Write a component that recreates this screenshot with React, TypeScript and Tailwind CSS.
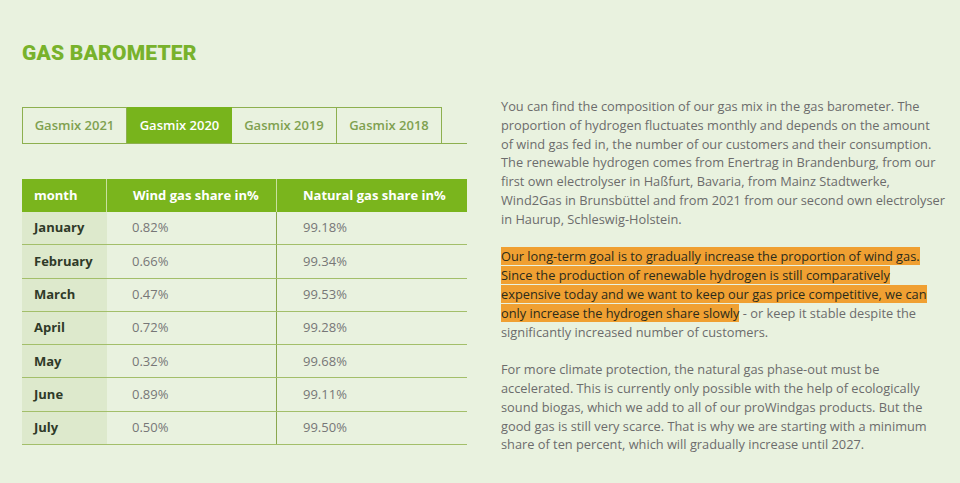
import React from "react";

const rows = [
  ["January", "0.82%", "99.18%"],
  ["February", "0.66%", "99.34%"],
  ["March", "0.47%", "99.53%"],
  ["April", "0.72%", "99.28%"],
  ["May", "0.32%", "99.68%"],
  ["June", "0.89%", "99.11%"],
  ["July", "0.50%", "99.50%"],
];

const tabs = ["Gasmix 2021", "Gasmix 2020", "Gasmix 2019", "Gasmix 2018"];

export default function App() {
  return (
    <div
      className="w-[960px] h-[483px] overflow-hidden bg-[#e9f2df] text-[#666]"
      style={{ fontFamily: '"Open Sans", "Liberation Sans", sans-serif' }}
    >
      <div className="px-[22px] pt-[40px]">
        <h1
          className="text-[21px] leading-[26px] font-black tracking-[0.2px] text-[#78b22c]"
          style={{ fontFamily: 'Roboto, "Liberation Sans", sans-serif' }}
        >
          GAS BAROMETER
        </h1>
        <div className="flex gap-[34px] mt-[41px]">
          <div className="w-[445px] shrink-0">
            <div className="flex border-b border-[#8db04f] w-[445px]">
              {tabs.map((t, i) => (
                <div
                  key={t}
                  className={
                    i === 1
                      ? "w-[105px] h-[36px] flex items-center justify-center text-[13px] font-semibold text-white bg-[#78b41c] border-t border-[#78b41c]"
                      : "w-[105px] h-[36px] flex items-center justify-center text-[13px] font-semibold text-[#7fa150] border-t border-r border-[#8db04f] " +
                        (i === 0 ? "border-l" : "")
                  }
                >
                  {t}
                </div>
              ))}
            </div>
            <div className="mt-[35px]">
              <div className="flex h-[33px] bg-[#7ab51d] text-white text-[13px] font-bold items-center">
                <div className="w-[85px] pl-[12px] h-full flex items-center border-r border-[#c9e09f]">month</div>
                <div className="w-[170px] pl-[26px] h-full flex items-center border-r border-[#c9e09f]">Wind gas share in%</div>
                <div className="flex-1 pl-[26px] h-full flex items-center">Natural gas share in%</div>
              </div>
              {rows.map((r) => (
                <div key={r[0]} className="flex h-[33.3px] border-b border-[#a3bf6a] text-[13px]">
                  <div className="w-[85px] pl-[12px] flex items-center bg-[#dde9cc] text-[13px] font-bold text-[#2f3a28]">
                    {r[0]}
                  </div>
                  <div className="w-[170px] pl-[25px] flex items-center border-r border-[#8aa84e] text-[#777]">
                    {r[1]}
                  </div>
                  <div className="flex-1 pl-[26px] flex items-center text-[#777]">{r[2]}</div>
                </div>
              ))}
            </div>
          </div>
          <div className="w-[458px] -mt-[10px] text-[12.8px] leading-[18.8px] text-[#6c6c6c] whitespace-nowrap">
            <p>
              You can find the composition of our gas mix in the gas barometer. The
              <br />
              proportion of hydrogen fluctuates monthly and depends on the amount
              <br />
              of wind gas fed in, the number of our customers and their consumption.
              <br />
              The renewable hydrogen comes from Enertrag in Brandenburg, from our
              <br />
              first own electrolyser in Haßfurt, Bavaria, from Mainz Stadtwerke,
              <br />
              Wind2Gas in Brunsbüttel and from 2021 from our second own electrolyser
              <br />
              in Haurup, Schleswig-Holstein.
            </p>
            <p className="mt-[18.8px]">
              <span className="bg-[#f0a032] text-[#2b2b1a] box-decoration-clone">
                Our long-term goal is to gradually increase the proportion of wind gas.
                <br />
                Since the production of renewable hydrogen is still comparatively
                <br />
                expensive today and we want to keep our gas price competitive, we can
                <br />
                only increase the hydrogen share slowly
              </span>{" "}
              - or keep it stable despite the
              <br />
              significantly increased number of customers.
            </p>
            <p className="mt-[18.8px]">
              For more climate protection, the natural gas phase-out must be
              <br />
              accelerated. This is currently only possible with the help of ecologically
              <br />
              sound biogas, which we add to all of our proWindgas products. But the
              <br />
              good gas is still very scarce. That is why we are starting with a minimum
              <br />
              share of ten percent, which will gradually increase until 2027.
            </p>
          </div>
        </div>
      </div>
    </div>
  );
}
